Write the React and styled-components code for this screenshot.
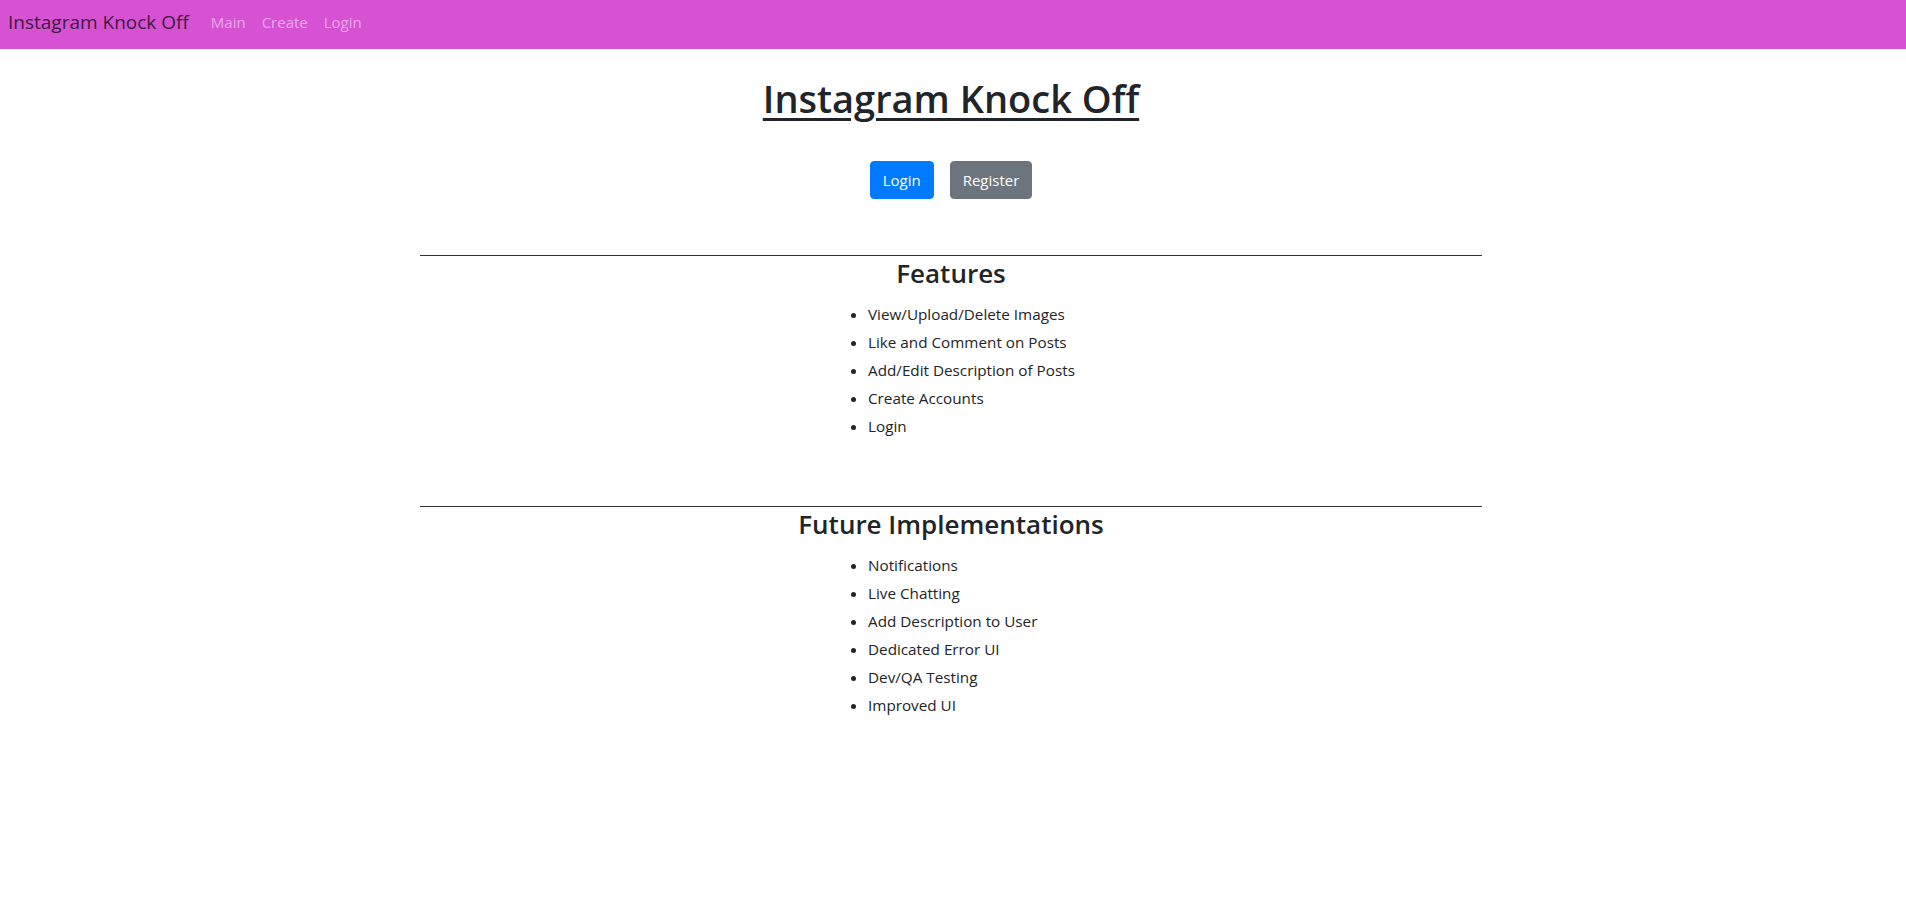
import React from "react";
import styled, { createGlobalStyle } from "styled-components";

const GlobalStyle = createGlobalStyle`
  html, body { margin: 0; padding: 0; background: #fff; }
  body {
    font-family: "Open Sans", "Noto Sans", "Liberation Sans", sans-serif;
    color: #212529;
    font-size: 16px;
    line-height: 1.5;
  }
  * { box-sizing: border-box; }
`;

const NavBar = styled.nav`
  height: 49px;
  background: #d652d3;
  display: flex;
  align-items: center;
  padding: 0 8px 5px;
`;

const Brand = styled.a`
  font-size: 19px;
  color: #40193f;
  text-decoration: none;
  margin-right: 14px;
  white-space: nowrap;
`;

const NavLink = styled.a`
  font-size: 15px;
  color: #eba8e9;
  text-decoration: none;
  padding: 0 8px;
`;

const Main = styled.main`
  display: flex;
  flex-direction: column;
  align-items: center;
  padding-right: 4px;
`;

const Title = styled.h1`
  font-size: 38px;
  font-weight: 600;
  line-height: 48px;
  text-decoration: underline;
  text-underline-offset: 5px;
  text-decoration-thickness: 3px;
  margin: 25px 0 0;
`;

const ButtonRow = styled.div`
  display: flex;
  gap: 16px;
  margin-top: 39px;
`;

const Button = styled.button`
  font-family: inherit;
  font-size: 15px;
  line-height: 24px;
  height: 38px;
  padding: 6px 12px;
  border: 1px solid ${(p) => p.$bg};
  border-radius: 4px;
  background: ${(p) => p.$bg};
  color: #fff;
  cursor: pointer;
`;

const Section = styled.section`
  width: 1062px;
  border-top: 1.5px solid #333;
  display: flex;
  flex-direction: column;
  align-items: center;
  margin-top: ${(p) => p.$top}px;
`;

const SectionTitle = styled.h3`
  font-size: 26px;
  font-weight: 600;
  line-height: 34px;
  margin: 0 0 10px;
`;

const List = styled.ul`
  width: 246px;
  margin: 0;
  padding-left: 40px;
  white-space: nowrap;
`;

const Item = styled.li`
  font-size: 15.25px;
  line-height: 28px;
`;

const features = [
  "View/Upload/Delete Images",
  "Like and Comment on Posts",
  "Add/Edit Description of Posts",
  "Create Accounts",
  "Login",
];

const future = [
  "Notifications",
  "Live Chatting",
  "Add Description to User",
  "Dedicated Error UI",
  "Dev/QA Testing",
  "Improved UI",
];

export default function App() {
  return (
    <>
      <GlobalStyle />
      <NavBar>
        <Brand href="#">Instagram Knock Off</Brand>
        <NavLink href="#">Main</NavLink>
        <NavLink href="#">Create</NavLink>
        <NavLink href="#">Login</NavLink>
      </NavBar>
      <Main>
        <Title>Instagram Knock Off</Title>
        <ButtonRow>
          <Button $bg="#007bff">Login</Button>
          <Button $bg="#6c757d">Register</Button>
        </ButtonRow>
        <Section $top={56}>
          <SectionTitle>Features</SectionTitle>
          <List>
            {features.map((f) => (
              <Item key={f}>{f}</Item>
            ))}
          </List>
        </Section>
        <Section $top={66}>
          <SectionTitle>Future Implementations</SectionTitle>
          <List>
            {future.map((f) => (
              <Item key={f}>{f}</Item>
            ))}
          </List>
        </Section>
      </Main>
    </>
  );
}
